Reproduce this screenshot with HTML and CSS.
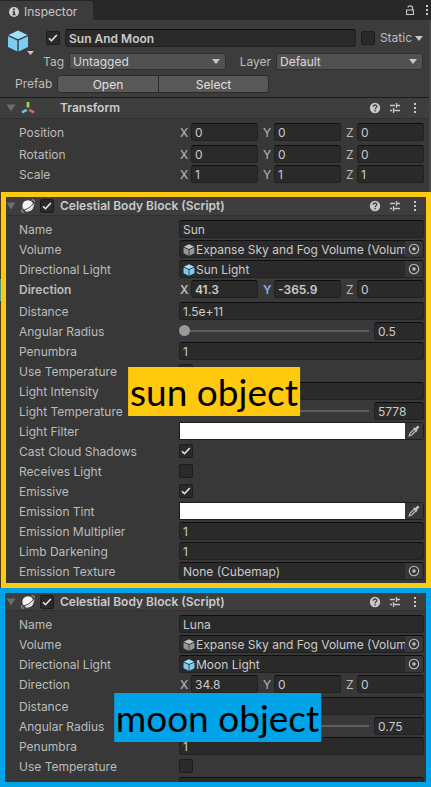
FILE: index.html
```html
<!DOCTYPE html>
<html lang="en">
<head>
<meta charset="utf-8">
<meta name="viewport" content="width=device-width, initial-scale=1">
<title>Inspector</title>
<link rel="stylesheet" href="styles.css">
</head>
<body>
<svg class="defs" width="0" height="0" aria-hidden="true">
  <symbol id="cube" viewBox="0 0 22 22">
    <path class="cube-top" d="M11 0.500 20.500 5 11 9.300 1.500 5Z"/>
    <path class="cube-side" d="M1 6.300 10.300 10.500V21.500L1 17Z"/>
    <path class="cube-side" d="M21 6.300 11.700 10.500V21.500L21 17Z"/>
  </symbol>
  <symbol id="help" viewBox="0 0 12 12">
    <circle cx="6" cy="6" r="5.200" fill="#c8c8c8"/>
    <path d="M4.200 4.700C4.200 2.400 7.900 2.500 7.800 4.600 7.800 5.700 6.100 5.700 6.100 7.200M6.100 8.100V9.400" fill="none" stroke="#3e3e3e" stroke-width="1.300"/>
  </symbol>
  <symbol id="preset" viewBox="0 0 12 12">
    <path d="M1 3.500H6M8 3.500H11M7.500 1V6M1 8.500H3M5 8.500H11M4.500 6V11" fill="none" stroke="#c8c8c8" stroke-width="1.300"/>
  </symbol>
  <symbol id="dots" viewBox="0 0 4 12">
    <path d="M1 1H3V3H1ZM1 5H3V7H1ZM1 9H3V11H1Z" fill="#c8c8c8"/>
  </symbol>
  <symbol id="fold" viewBox="0 0 10 8">
    <path d="M0.500 0.500H9.500L5 7.500Z" fill="#6c6c6c"/>
  </symbol>
  <symbol id="planet" viewBox="0 0 14 14">
    <circle cx="7" cy="6.800" r="5.600" fill="#f6f6f6"/>
    <path d="M2 11C6 10.600 10.800 7.400 12.600 3.800" fill="none" stroke="#3e3e3e" stroke-width="1"/>
    <path d="M1.600 9.800C-0.300 12.600 0.500 13.700 3 12.900M4.500 12.900C8 12 12.500 8 13.200 4.500M13.500 2.800C13.500 0.800 12.300 0.500 10.500 1.100" fill="none" stroke="#c0c0c0" stroke-width="0.900"/>
  </symbol>
  <symbol id="target" viewBox="0 0 12 12">
    <circle cx="6" cy="6" r="4.700" fill="none" stroke="#c0c0c0" stroke-width="1.100"/>
    <circle cx="6" cy="6" r="1.700" fill="#c0c0c0"/>
  </symbol>
  <symbol id="dropper" viewBox="0 0 12 12">
    <path d="M1.200 10.800 2 8.300 6.300 4 8 5.700 3.700 10Z" fill="none" stroke="#c4c4c4" stroke-width="1.100"/>
    <path d="M5.200 3.200 6.300 2.300 7.300 3.200 9 1.100C10.300 0.300 11.700 1.700 10.900 3L8.800 4.700 9.700 5.700 8.700 6.800Z" fill="#c4c4c4"/>
  </symbol>
</svg>

<header class="tabbar">
  <h1 class="tab">
    <svg width="10" height="10" viewBox="0 0 10 10" aria-hidden="true"><circle cx="5" cy="5" r="5" fill="#d0d0d0"/><path d="M4 1.500H6V3.200H4ZM3.500 4.200H6V7.300H6.800V8.300H3.300V7.300H4.200V5.200H3.500Z" fill="#3c3c3c"/></svg>
    Inspector
  </h1>
  <button class="icon-button" aria-label="Lock"><svg width="8" height="10" viewBox="0 0 8 10"><path d="M0.500 5H7.500V9.500H0.500ZM6.500 5V2.500C6.500 0.200 2 0.200 2 2.500" fill="none" stroke="#c8c8c8" stroke-width="1.200"/></svg></button>
  <button class="icon-button" aria-label="Tab menu"><svg width="4" height="12"><use href="#dots"/></svg></button>
</header>

<div class="panel">
  <section class="object">
    <button class="icon-button object-icon" aria-label="Object icon">
      <svg class="cube" width="22" height="22"><use href="#cube"/></svg>
      <svg class="object-arrow" width="7" height="4" viewBox="0 0 7 4"><path d="M0 0H7L3.500 4Z" fill="#c8c8c8"/></svg>
    </button>
    <div class="object-name">
      <input type="checkbox" class="check" aria-label="Active" checked>
      <input type="text" class="field strong" aria-label="Object name" value="Sun And Moon">
      <input type="checkbox" class="check" id="static">
      <label class="static" for="static">Static</label>
      <button class="icon-button" aria-label="Static options"><svg width="8" height="5" viewBox="0 0 8 5"><path d="M0 0H8L4 5Z" fill="#c8c8c8"/></svg></button>
    </div>
    <div class="object-tags">
      <label for="tag">Tag</label>
      <select id="tag" class="drop"><option>Untagged</option></select>
      <label for="layer">Layer</label>
      <select id="layer" class="drop"><option>Default</option></select>
    </div>
    <div class="object-prefab">
      <span>Prefab</span>
      <button class="push">Open</button><button class="push">Select</button>
    </div>
  </section>

  <section class="transform">
    <div class="head">
      <svg width="10" height="8" aria-hidden="true"><use href="#fold"/></svg>
      <svg width="14" height="14" viewBox="0 0 14 14" aria-hidden="true"><path d="M7 6.500V1" stroke="#a6d84a" stroke-width="2.600"/><path d="M5.800 8.800 1 11.400" stroke="#6cc0ee" stroke-width="2.600"/><path d="M8.200 8.800 13 11.400" stroke="#e0694c" stroke-width="2.600"/></svg>
      <h2>Transform</h2>
      <button class="icon-button" aria-label="Help"><svg width="12" height="12"><use href="#help"/></svg></button>
      <button class="icon-button" aria-label="Presets"><svg width="12" height="12"><use href="#preset"/></svg></button>
      <button class="icon-button" aria-label="More"><svg width="4" height="12"><use href="#dots"/></svg></button>
    </div>
    <div class="rows">
      <div class="row vector-row"><span>Position</span><div class="vector">
        <label>X<input type="text" class="field" value="0"></label><label>Y<input type="text" class="field" value="0"></label><label>Z<input type="text" class="field" value="0"></label></div></div>
      <div class="row"><span>Rotation</span><div class="vector">
        <label>X<input type="text" class="field" value="0"></label><label>Y<input type="text" class="field" value="0"></label><label>Z<input type="text" class="field" value="0"></label></div></div>
      <div class="row"><span>Scale</span><div class="vector">
        <label>X<input type="text" class="field" value="1"></label><label>Y<input type="text" class="field" value="1"></label><label>Z<input type="text" class="field" value="1"></label></div></div>
    </div>
  </section>
</div>

<div class="sun-wrap">
<section class="frame sun">
  <div class="head">
    <svg width="10" height="8" aria-hidden="true"><use href="#fold"/></svg>
    <svg width="14" height="14" aria-hidden="true"><use href="#planet"/></svg>
    <input type="checkbox" class="check" aria-label="Enable sun block" checked>
    <h2>Celestial Body Block (Script)</h2>
    <button class="icon-button" aria-label="Help"><svg width="12" height="12"><use href="#help"/></svg></button>
    <button class="icon-button" aria-label="Presets"><svg width="12" height="12"><use href="#preset"/></svg></button>
    <button class="icon-button" aria-label="More"><svg width="4" height="12"><use href="#dots"/></svg></button>
  </div>
  <div class="rows">
    <div class="row"><label for="s-name">Name</label><input type="text" class="field" id="s-name" value="Sun"></div>
    <div class="row"><label for="s-volume">Volume</label><div class="field picker"><button class="value" id="s-volume"><svg class="cube gray" width="12" height="12"><use href="#cube"/></svg><span>Expanse Sky and Fog Volume (Volume</span></button><button class="pick" aria-label="Pick volume"><svg width="12" height="12"><use href="#target"/></svg></button></div></div>
    <div class="row"><label for="s-light">Directional Light</label><div class="field picker"><button class="value" id="s-light"><svg class="cube" width="12" height="12"><use href="#cube"/></svg><span>Sun Light</span></button><button class="pick" aria-label="Pick light"><svg width="12" height="12"><use href="#target"/></svg></button></div></div>
    <div class="row vector-row"><span class="strong">Direction</span><div class="vector">
      <label class="strong">X<input type="text" class="field strong" value="41.3"></label><label class="strong active">Y<input type="text" class="field strong" value="-365.9"></label><label>Z<input type="text" class="field" value="0"></label></div></div>
    <div class="row"><label for="s-distance">Distance</label><input type="text" class="field" id="s-distance" value="1.5e+11"></div>
    <div class="row"><label for="s-radius">Angular Radius</label><div class="slider"><input type="range" id="s-radius" min="0" max="100" value="0"><input type="text" class="field" aria-label="Angular radius value" value="0.5"></div></div>
    <div class="row"><label for="s-penumbra">Penumbra</label><input type="text" class="field" id="s-penumbra" value="1"></div>
    <div class="row"><label for="s-usetemp">Use Temperature</label><input type="checkbox" class="check" id="s-usetemp" checked></div>
    <div class="row"><label for="s-intensity">Light Intensity</label><input type="text" class="field" id="s-intensity"></div>
    <div class="row"><label for="s-temp">Light Temperature</label><div class="slider"><input type="range" id="s-temp" min="1000" max="20000" value="5778"><input type="text" class="field" aria-label="Light temperature value" value="5778"></div></div>
    <div class="row"><label for="s-filter">Light Filter</label><div class="color"><input type="color" id="s-filter" value="#ffffff"><button class="pick" aria-label="Sample filter color"><svg width="12" height="12"><use href="#dropper"/></svg></button></div></div>
    <div class="row"><label for="s-shadows">Cast Cloud Shadows</label><input type="checkbox" class="check" id="s-shadows" checked></div>
    <div class="row"><label for="s-receives">Receives Light</label><input type="checkbox" class="check" id="s-receives"></div>
    <div class="row"><label for="s-emissive">Emissive</label><input type="checkbox" class="check" id="s-emissive" checked></div>
    <div class="row"><label for="s-tint">Emission Tint</label><div class="color"><input type="color" id="s-tint" value="#ffffff"><button class="pick" aria-label="Sample tint color"><svg width="12" height="12"><use href="#dropper"/></svg></button></div></div>
    <div class="row"><label for="s-mult">Emission Multiplier</label><input type="text" class="field" id="s-mult" value="1"></div>
    <div class="row"><label for="s-limb">Limb Darkening</label><input type="text" class="field" id="s-limb" value="1"></div>
    <div class="row"><label for="s-texture">Emission Texture</label><div class="field picker"><button class="value" id="s-texture"><span>None (Cubemap)</span></button><button class="pick" aria-label="Pick texture"><svg width="12" height="12"><use href="#target"/></svg></button></div></div>
  </div>
  <p class="callout">sun object</p>
</section>
</div>

<section class="frame moon">
  <div class="head">
    <svg width="10" height="8" aria-hidden="true"><use href="#fold"/></svg>
    <svg width="14" height="14" aria-hidden="true"><use href="#planet"/></svg>
    <input type="checkbox" class="check" aria-label="Enable moon block" checked>
    <h2>Celestial Body Block (Script)</h2>
    <button class="icon-button" aria-label="Help"><svg width="12" height="12"><use href="#help"/></svg></button>
    <button class="icon-button" aria-label="Presets"><svg width="12" height="12"><use href="#preset"/></svg></button>
    <button class="icon-button" aria-label="More"><svg width="4" height="12"><use href="#dots"/></svg></button>
  </div>
  <div class="rows">
    <div class="row"><label for="m-name">Name</label><input type="text" class="field" id="m-name" value="Luna"></div>
    <div class="row"><label for="m-volume">Volume</label><div class="field picker"><button class="value" id="m-volume"><svg class="cube gray" width="12" height="12"><use href="#cube"/></svg><span>Expanse Sky and Fog Volume (Volume</span></button><button class="pick" aria-label="Pick volume"><svg width="12" height="12"><use href="#target"/></svg></button></div></div>
    <div class="row"><label for="m-light">Directional Light</label><div class="field picker"><button class="value" id="m-light"><svg class="cube" width="12" height="12"><use href="#cube"/></svg><span>Moon Light</span></button><button class="pick" aria-label="Pick light"><svg width="12" height="12"><use href="#target"/></svg></button></div></div>
    <div class="row vector-row"><span>Direction</span><div class="vector">
      <label>X<input type="text" class="field" value="34.8"></label><label>Y<input type="text" class="field" value="0"></label><label>Z<input type="text" class="field" value="0"></label></div></div>
    <div class="row"><label for="m-distance">Distance</label><input type="text" class="field" id="m-distance"></div>
    <div class="row"><label for="m-radius">Angular Radius</label><div class="slider"><input type="range" id="m-radius" min="0" max="100" value="20"><input type="text" class="field" aria-label="Angular radius value" value="0.75"></div></div>
    <div class="row"><label for="m-penumbra">Penumbra</label><input type="text" class="field" id="m-penumbra" value="1"></div>
    <div class="row"><label for="m-usetemp">Use Temperature</label><input type="checkbox" class="check" id="m-usetemp"></div>
    <div class="row"><span></span><input type="text" class="field" aria-label="Light intensity"></div>
  </div>
  <p class="callout">moon object</p>
</section>
</body>
</html>
```
FILE: styles.css
```css
* {
  box-sizing: border-box;
}

body {
  margin: 0;
  height: 100vh;
  display: flex;
  flex-direction: column;
  overflow: hidden;
  background: #383838;
  color: #bcbcbc;
  font: 12px/18px Inter, "Liberation Sans", sans-serif;
}

.defs {
  position: absolute;
}

h1,
h2,
p {
  margin: 0;
  font-size: inherit;
  font-weight: 400;
}

svg {
  display: block;
  flex: none;
}

input,
select,
button {
  margin: 0;
  padding: 0;
  border: 0;
  border-radius: 0;
  background: none;
  color: inherit;
  font: inherit;
  appearance: none;
}

.strong {
  font-weight: 600;
}

.icon-button {
  flex: none;
}

.cube {
  --top: #9fe0fb;
  --side: #7accf2;
}

.cube.gray {
  --top: #c4c4c4;
  --side: #969696;
}

.cube-top {
  fill: var(--top);
}

.cube-side {
  fill: var(--side);
}

/* Tab bar */

.tabbar {
  flex: none;
  display: flex;
  align-items: center;
  height: 20px;
  padding-right: 2px;
  gap: 11px;
  background: #282828;
}

.tab {
  display: flex;
  align-items: center;
  gap: 5px;
  height: 20px;
  padding: 3px 16px 0 9px;
  margin-right: auto;
  border-top: 1px solid #242424;
  border-radius: 0 3px 0 0;
  background: #3c3c3c;
  color: #c8c8c8;
}

/* Object header */

.panel {
  flex: none;
  border-right: 2px solid #484848;
}

.object {
  display: grid;
  grid-template-columns: 34px 1fr;
  row-gap: 5px;
  padding: 9px 6px 5px 7px;
  background: #3c3c3c;
  border-bottom: 1px solid #1c1c1c;
}

.object-icon {
  grid-row: 1 / 3;
  justify-self: start;
  align-self: start;
  padding-top: 1px;
}

.object-arrow {
  margin: -1px 0 0 20px;
}

.object-name {
  display: flex;
  align-items: center;
  gap: 5px;
  margin-left: 5px;
}

.object-name .field {
  flex: 1;
  min-width: 0;
}

.object-name .static {
  margin-right: -2px;
}

.object-tags {
  display: grid;
  grid-template-columns: 23px 157fr 40px 147fr;
  column-gap: 5px;
  height: 17px;
  margin-top: 1px;
}

.object-tags label {
  text-align: right;
}

.drop {
  width: 100%;
  min-width: 0;
  height: 17px;
  padding: 0 3px;
  border: 1px solid #303030;
  border-radius: 2px;
  background: url("data:image/svg+xml,%3Csvg xmlns='http://www.w3.org/2000/svg' width='8' height='5'%3E%3Cpath d='M0 0H8L4 5Z' fill='%23c8c8c8'/%3E%3C/svg%3E") no-repeat right 5px center #515151;
  color: #dadada;
  line-height: 15px;
}

.object-prefab {
  grid-column: 1 / 3;
  display: grid;
  grid-template-columns: 42px 102px 110px;
  padding-left: 8px;
  height: 17px;
  margin-right: auto;
}

.object-prefab .push {
  border: 1px solid #2c2c2c;
  border-radius: 3px 0 0 3px;
  background: #585858;
  color: #e0e0e0;
  line-height: 15px;
}

.object-prefab .push + .push {
  border-left: 0;
  border-radius: 0 3px 3px 0;
}

/* Component header */

.head {
  display: flex;
  align-items: center;
  height: 21px;
  padding: 0 12px 0 6px;
  background: #3e3e3e;
  border-bottom: 1px solid #303030;
}

.head > svg:first-child {
  margin-right: 5px;
}

.head h2 {
  margin: 0 auto 0 25px;
  color: #cacaca;
  font-weight: 600;
}

.head .check {
  margin-left: 5px;
}

.head .check + h2 {
  margin-left: 6px;
}

.head .icon-button + .icon-button {
  margin-left: 8px;
}

.head .icon-button:last-child {
  margin-left: 12px;
}

/* Property rows */

.rows {
  display: flex;
  flex-direction: column;
  gap: 2px;
  padding: 4px 5px 9px 19px;
}

.row {
  display: grid;
  grid-template-columns: minmax(120px, 160fr) 245fr;
  align-items: start;
  height: 18px;
  line-height: 20px;
  white-space: nowrap;
}

.row > .check {
  margin-top: 2px;
}

.vector-row {
  margin-bottom: 2px;
}

.field {
  width: 100%;
  min-width: 0;
  height: 18px;
  padding: 0 3px;
  border: 1px solid #212121;
  border-top-color: #0e0e0e;
  border-radius: 3px;
  background: #2a2a2a;
  color: #cacaca;
  line-height: 16px;
}

.vector {
  display: grid;
  grid-template-columns: repeat(3, 1fr);
  gap: 4px;
}

.vector label {
  display: grid;
  grid-template-columns: 11px 1fr;
  height: 18px;
  padding-left: 1px;
}

.active {
  color: #7fadf2;
}

.check {
  width: 14px;
  height: 14px;
  flex: none;
  border: 1px solid #1c1c1c;
  border-radius: 2px;
  background: #2a2a2a;
}

.check:checked {
  background: url("data:image/svg+xml,%3Csvg xmlns='http://www.w3.org/2000/svg' width='12' height='12'%3E%3Cpath d='M2 6.200 4.500 8.700 9.800 3' fill='none' stroke='%23e8e8e8' stroke-width='1.600'/%3E%3C/svg%3E") no-repeat center #2a2a2a;
}

.slider {
  display: grid;
  grid-template-columns: 1fr 50px;
  gap: 5px;
}

.slider [type="range"] {
  width: 100%;
  min-width: 0;
  height: 18px;
}

.slider [type="range"]::-webkit-slider-runnable-track {
  height: 2px;
  background: #5e5e5e;
}

.slider [type="range"]::-webkit-slider-thumb {
  appearance: none;
  width: 11px;
  height: 11px;
  margin-top: -5px;
  border-radius: 50%;
  background: #999;
}

.picker,
.color {
  display: grid;
  grid-template-columns: 1fr 18px;
}

.picker {
  padding: 0;
  overflow: hidden;
}

.value {
  display: flex;
  align-items: center;
  gap: 1px;
  min-width: 0;
  padding: 1px 0 0 3px;
  overflow: hidden;
  text-align: left;
}

.pick {
  display: grid;
  place-items: center;
  background: #373737;
}

.color {
  height: 18px;
  border: 1px solid #1e1e1e;
  border-radius: 0 3px 3px 0;
}

.color [type="color"] {
  width: 100%;
  height: 16px;
}

.color [type="color"]::-webkit-color-swatch-wrapper {
  padding: 0;
}

.color [type="color"]::-webkit-color-swatch {
  border: 0;
  border-radius: 0;
}

/* Annotated frames */

.frame {
  position: relative;
  border: 5px solid;
  background: #383838;
}

.frame .head {
  height: 19px;
  padding: 0 9px 0 1px;
}

.frame .rows {
  padding: 4px 2px 3px 14px;
}

.sun-wrap {
  flex: none;
  padding-left: 1px;
  background: linear-gradient(#4a3c18 87px, #4c9a80 87px 109px, #4a3c18 109px);
}

.sun {
  border-color: #ffc90e;
}

.sun .head {
  padding-left: 0;
}

.sun .rows {
  padding-left: 13px;
}

.moon {
  flex: 1 1 0;
  min-height: 0;
  overflow: hidden;
  border-color: #00a2e8;
}

.moon .head {
  height: 18px;
}

.callout {
  position: absolute;
  transform: translateX(-50%);
  padding: 0 2px;
  color: #000;
  font: 37px/49px Lato, "Open Sans", sans-serif;
  white-space: nowrap;
}

.sun .callout {
  top: 170px;
  left: calc(50% - 2px);
  background: #ffc90e;
}

.moon .callout {
  top: 100px;
  left: calc(50% + 2px);
  background: #00a2e8;
}
```
